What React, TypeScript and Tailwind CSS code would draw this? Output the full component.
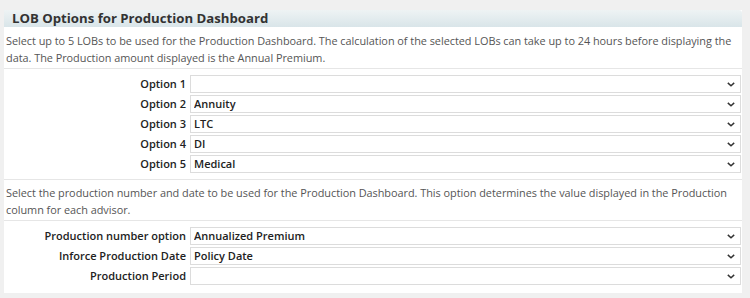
import { ChangeEvent, useState } from "react";

const font = { fontFamily: '"Open Sans", "Noto Sans", Arial, sans-serif' };

function Chevron() {
	return (
		<svg
			viewBox="0 0 10 6"
			className="pointer-events-none absolute right-[6px] top-[7px] h-[5px] w-[8px]"
		>
			<path d="M1 1 L5 4.6 L9 1" fill="none" stroke="#333" strokeWidth="1.8" />
		</svg>
	);
}

function SelectRow({
	label,
	value,
	options,
	onChange,
}: {
	label: string;
	value: string;
	options: string[];
	onChange: (v: string) => void;
}) {
	return (
		<div className="flex items-center h-[18px] gap-[4px] pr-[1px]">
			<label className="w-[182px] shrink-0 text-right text-[11px] font-semibold text-[#222] leading-[18px]">
				{label}
			</label>
			<div className="relative flex-1">
				<select
					value={value}
					onChange={(e: ChangeEvent<HTMLSelectElement>) => onChange(e.target.value)}
					className="block w-full h-[18px] appearance-none border border-[#dcdcdc] bg-white pl-[3px] text-[11px] font-semibold text-[#222] leading-[16px] outline-none"
					style={font}
				>
					{options.map((o) => (
						<option key={o} value={o}>
							{o}
						</option>
					))}
				</select>
				<Chevron />
			</div>
		</div>
	);
}

const lobs = ["", "Annuity", "LTC", "DI", "Medical", "Life"];

export default function App() {
	const [opts, setOpts] = useState<string[]>(["", "Annuity", "LTC", "DI", "Medical"]);
	const [prodNum, setProdNum] = useState("Annualized Premium");
	const [inforce, setInforce] = useState("Policy Date");
	const [period, setPeriod] = useState("");

	return (
		<div
			className="w-[750px] h-[298px] bg-[#f0f0f0] pt-[10px] pl-[4px] pr-[8px] overflow-hidden"
			style={font}
		>
			<div className="bg-white pb-[8px]">
				<div className="h-[17px] px-[8px] bg-gradient-to-b from-[#eef3f4] to-[#d9e5e9] rounded-tr-[3px] text-[13.2px] font-bold text-[#333] leading-[17px]">
					LOB Options for Production Dashboard
				</div>
				<p className="pt-[5px] pb-[2px] pl-[2px] text-[10.9px] tracking-[-0.03px] text-[#555] leading-[17px]">
					Select up to 5 LOBs to be used for the Production Dashboard. The calculation of the selected LOBs can
					take up to 24 hours before displaying the data. The Production amount displayed is the Annual Premium.
				</p>
				<div className="border-t border-[#e6e6e6] pt-[6px] pb-[6px] flex flex-col gap-[2px]">
					{opts.map((v, i) => (
						<SelectRow
							key={i}
							label={`Option ${i + 1}`}
							value={v}
							options={lobs}
							onChange={(nv) => setOpts((prev) => prev.map((p, j) => (j === i ? nv : p)))}
						/>
					))}
				</div>
				<p className="border-t border-[#e6e6e6] pt-[4px] pb-[2px] pl-[2px] text-[10.9px] tracking-[-0.03px] text-[#555] leading-[17px]">
					Select the production number and date to be used for the Production Dashboard. This option determines the
					value displayed in the Production column for each advisor.
				</p>
				<div className="border-t border-[#e6e6e6] pt-[6px] flex flex-col gap-[2px]">
					<SelectRow
						label="Production number option"
						value={prodNum}
						options={["Annualized Premium", "Target Premium", "Commissionable Premium"]}
						onChange={setProdNum}
					/>
					<SelectRow
						label="Inforce Production Date"
						value={inforce}
						options={["Policy Date", "Inforce Date", "Submit Date"]}
						onChange={setInforce}
					/>
					<SelectRow
						label="Production Period"
						value={period}
						options={["", "Month to Date", "Year to Date"]}
						onChange={setPeriod}
					/>
				</div>
			</div>
		</div>
	);
}
